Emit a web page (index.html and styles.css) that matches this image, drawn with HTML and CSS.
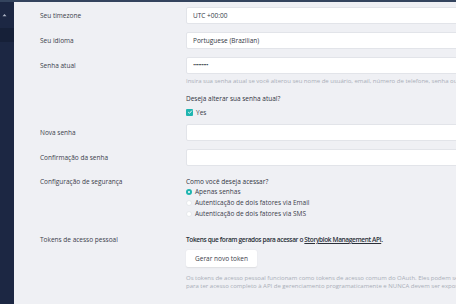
FILE: index.html
```html
<!DOCTYPE html>
<html lang="pt-BR">
<head>
<meta charset="utf-8">
<title>Configurações da conta</title>
<link rel="stylesheet" href="styles.css">
</head>
<body>
<div class="app">
  <aside class="sidebar">
    <div class="side-caret">
      <svg width="5" height="4" viewBox="0 0 5 4"><path d="M0.5 3.2 L2.5 1 L4.5 3.2 Z" fill="#aeb6c6"/></svg>
    </div>
    <div class="side-item active"></div>
  </aside>
  <main class="main">
    <div class="row">
      <div class="label">Seu timezone</div>
      <div class="field"><div class="input">UTC +00:00</div></div>
    </div>
    <div class="row">
      <div class="label">Seu idioma</div>
      <div class="field"><div class="input">Portuguese (Brazilian)</div></div>
    </div>
    <div class="row">
      <div class="label">Senha atual</div>
      <div class="field">
        <div class="input pw">•••••••••</div>
        <p class="help first">Insira sua senha atual se você alterou seu nome de usuário, email, número de telefone, senha ou conta conectada.</p>
        <p class="question">Deseja alterar sua senha atual?</p>
        <label class="check"><span class="box"><svg width="6" height="6" viewBox="0 0 6 6"><path d="M1.2 3.1 L2.5 4.3 L4.9 1.6" fill="none" stroke="#fff" stroke-width="0.9"/></svg></span>Yes</label>
      </div>
    </div>
    <div class="row new">
      <div class="label">Nova senha</div>
      <div class="field"><div class="input"></div></div>
    </div>
    <div class="row">
      <div class="label">Confirmação da senha</div>
      <div class="field"><div class="input"></div></div>
    </div>
    <div class="row sec">
      <div class="label text">Configuração de segurança</div>
      <div class="field">
        <p class="question">Como você deseja acessar?</p>
        <label class="radio"><span class="dot on"></span>Apenas senhas</label>
        <label class="radio"><span class="dot"></span>Autenticação de dois fatores via Email</label>
        <label class="radio"><span class="dot"></span>Autenticação de dois fatores via SMS</label>
      </div>
    </div>
    <div class="row tokens">
      <div class="label text">Tokens de acesso pessoal</div>
      <div class="field">
        <p class="strong">Tokens que foram gerados para acessar o <a href="#">Storyblok Management API</a>.</p>
        <button class="btn">Gerar novo token</button>
        <p class="help tk">Os tokens de acesso pessoal funcionam como tokens de acesso comum do OAuth. Eles podem ser usados<br>para ter acesso completo à API de gerenciamento programaticamente e NUNCA devem ser expostos publicamente.</p>
      </div>
    </div>
  </main>
</div>
</body>
</html>
```
FILE: styles.css
```css
* { box-sizing: border-box; }
html, body { margin: 0; padding: 0; }
body {
  width: 456px;
  height: 304px;
  overflow: hidden;
  background: #eff0f4;
  font-family: "Open Sans", "Noto Sans", sans-serif;
  font-size: 6.5px;
  color: #3b404b;
}
.app {
  display: flex;
  height: 304px;
  border-top: 2px solid #34445e;
}
.sidebar {
  width: 14px;
  flex: none;
  background: #1c2743;
  display: flex;
  flex-direction: column;
}
.side-caret {
  height: 26px;
  display: flex;
  align-items: center;
  padding-left: 2px;
}
.side-item.active {
  height: 14px;
  background: #162038;
}
.main {
  flex: none;
  width: 700px;
  padding: 5px 0 0 26px;
}
.row {
  display: flex;
  margin-bottom: 8px;
}
.label {
  width: 146px;
  flex: none;
  line-height: 17px;
  white-space: nowrap;
}
.label.text { line-height: 8px; }
.field {
  width: 400px;
  flex: none;
}
.input {
  height: 17px;
  background: #fff;
  border: 1px solid #e2e4e9;
  border-radius: 2px;
  padding-left: 6px;
  line-height: 15px;
  color: #333844;
  white-space: nowrap;
}
.input.pw { letter-spacing: -0.6px; font-size: 6px; }
p { margin: 0; }
.help {
  color: #a9aeb8;
  font-size: 6px;
  line-height: 8px;
  white-space: nowrap;
}
.help.first { margin-top: 3px; }
.question {
  line-height: 8px;
  white-space: nowrap;
  color: #2f343e;
}
.field > .question { margin-top: 10px; }
.sec .field > .question { margin-top: 0; }
.check, .radio {
  display: flex;
  align-items: center;
  white-space: nowrap;
}
.check {
  margin-top: 5px;
  height: 8px;
}
.box {
  width: 7px;
  height: 7px;
  border-radius: 1px;
  background: #1fb5b0;
  display: inline-flex;
  align-items: center;
  justify-content: center;
  margin-right: 3px;
}
.row.sec { margin-top: 12px; }
.radio {
  height: 11px;
}
.dot {
  width: 6px;
  height: 6px;
  border-radius: 50%;
  background: #fff;
  border: 0.5px solid #e6e8ec;
  margin-right: 3px;
  flex: none;
}
.dot.on {
  background: #1fb5b0;
  border: none;
  position: relative;
}
.dot.on::after {
  content: "";
  position: absolute;
  left: 2px;
  top: 2px;
  width: 2px;
  height: 2px;
  border-radius: 50%;
  background: #fff;
}
.row.tokens { margin-top: 17px; }
.strong {
  font-weight: 600;
  letter-spacing: -0.35px;
  line-height: 8px;
  white-space: nowrap;
  color: #2b3039;
}
.strong a { color: #2b3039; text-decoration: underline; }
.btn {
  display: block;
  margin-top: 6px;
  height: 17px;
  padding: 0 9px;
  background: #fff;
  border: none;
  border-radius: 2px;
  box-shadow: 0 0.5px 1.5px rgba(0,0,0,0.08);
  font-family: inherit;
  font-size: 6.5px;
  color: #3b404b;
}
.help.tk { margin-top: 7px; }
```
